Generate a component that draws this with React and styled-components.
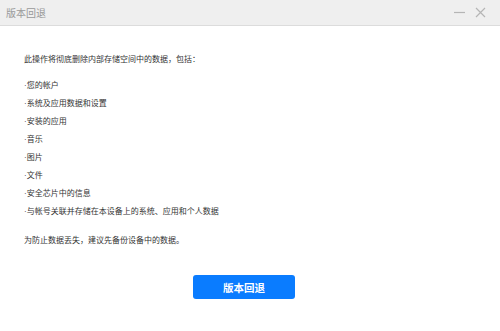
import React from "react";
import styled, { createGlobalStyle } from "styled-components";

const Global = createGlobalStyle`
  html, body { margin: 0; padding: 0; background: #fff; }
  body { font-family: "Liberation Sans", "Noto Sans CJK SC", sans-serif; }
`;

export default function App() {
  const items = [
    "您的帐户",
    "系统及应用数据和设置",
    "安装的应用",
    "音乐",
    "图片",
    "文件",
    "安全芯片中的信息",
    "与帐号关联并存储在本设备上的系统、应用和个人数据",
  ];
  return (
    <>
      <Global />
      <Window>
        <TitleBar>
          <Title>版本回退</Title>
          <Controls>
            <Ctrl>
              <svg width="11" height="11" viewBox="0 0 11 11">
                <path d="M0 5.5h11" stroke="#b5b5b5" strokeWidth="1.2" />
              </svg>
            </Ctrl>
            <Ctrl>
              <svg width="11" height="11" viewBox="0 0 11 11">
                <path d="M1 1l9 9M10 1l-9 9" stroke="#b5b5b5" strokeWidth="1.2" />
              </svg>
            </Ctrl>
          </Controls>
        </TitleBar>
        <Body>
          <Line>此操作将彻底删除内部存储空间中的数据，包括：</Line>
          <List>
            {items.map((t, i) => (
              <Line key={i}>·{t}</Line>
            ))}
          </List>
          <Line>为防止数据丢失，建议先备份设备中的数据。</Line>
          <Footer>
            <Button>版本回退</Button>
          </Footer>
        </Body>
      </Window>
    </>
  );
}

const Window = styled.div`
  width: 500px;
  height: 331px;
  display: flex;
  flex-direction: column;
  background: #fff;
  overflow: hidden;
`;

const TitleBar = styled.div`
  height: 25px;
  flex: none;
  display: flex;
  align-items: center;
  justify-content: space-between;
  padding: 0 14px 0 6px;
  background: #efefef;
  border-bottom: 1px solid #dcdcdc;
`;

const Title = styled.div`
  font-size: 10px;
  color: #999;
`;

const Controls = styled.div`
  display: flex;
  gap: 10px;
`;

const Ctrl = styled.div`
  width: 11px;
  height: 11px;
  display: flex;
`;

const Body = styled.div`
  padding: 25px 0 0 24px;
  display: flex;
  flex-direction: column;
`;

const List = styled.div`
  display: flex;
  flex-direction: column;
  margin: 8px 0 11px;
`;

const Line = styled.div`
  font-size: 8px;
  line-height: 18px;
  color: #333;
`;

const Footer = styled.div`
  display: flex;
  justify-content: center;
  padding: 25px 24px 0 0;
`;

const Button = styled.div`
  width: 102px;
  height: 24px;
  margin-left: -12px;
  border-radius: 3px;
  background: #0a7cff;
  color: #fff;
  font-size: 10.5px;
  font-weight: bold;
  display: flex;
  align-items: center;
  justify-content: center;
`;
